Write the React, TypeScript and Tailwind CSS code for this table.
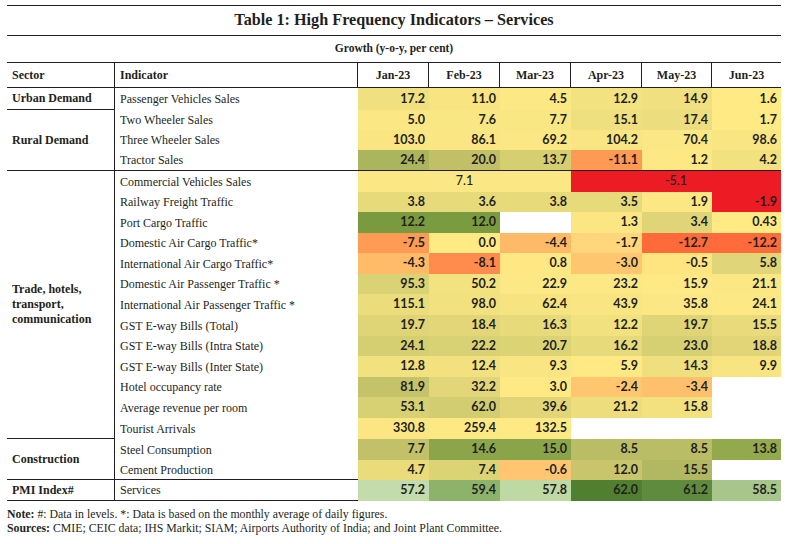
import React from "react";

type Cell = { v: string; c: string; span?: number; center?: boolean; normal?: boolean };
type Row = { h: number; ind: string; vals: Cell[]; sector?: { label: React.ReactNode; span: number; h: number }; lineInd?: boolean; lineVals?: boolean };

const W = "#ffffff";

const rows: Row[] = [
  {
    h: 22,
    sector: { label: "Urban Demand", span: 1, h: 22 },
    ind: "Passenger Vehicles Sales",
    vals: [
      { v: "17.2", c: "#f0e07f" },
      { v: "11.0", c: "#f8e582" },
      { v: "4.5", c: "#fde984" },
      { v: "12.9", c: "#f3e280" },
      { v: "14.9", c: "#f0e07f" },
      { v: "1.6", c: "#ffea84" },
    ],
  },
  {
    h: 20,
    sector: { label: "Rural Demand", span: 3, h: 61 },
    ind: "Two Wheeler Sales",
    vals: [
      { v: "5.0", c: "#fbe884" },
      { v: "7.6", c: "#f9e783" },
      { v: "7.7", c: "#f9e783" },
      { v: "15.1", c: "#efe07f" },
      { v: "17.4", c: "#ecde7e" },
      { v: "1.7", c: "#ffea84" },
    ],
  },
  {
    h: 20,
    ind: "Three Wheeler Sales",
    vals: [
      { v: "103.0", c: "#f9e683" },
      { v: "86.1", c: "#fae783" },
      { v: "69.2", c: "#fbe783" },
      { v: "104.2", c: "#f9e683" },
      { v: "70.4", c: "#fbe783" },
      { v: "98.6", c: "#f9e683" },
    ],
  },
  {
    h: 21,
    ind: "Tractor Sales",
    lineInd: true,
    lineVals: true,
    vals: [
      { v: "24.4", c: "#aab55e" },
      { v: "20.0", c: "#c1c068" },
      { v: "13.7", c: "#d6cf72" },
      { v: "-11.1", c: "#ff9a55" },
      { v: "1.2", c: "#fde884" },
      { v: "4.2", c: "#f1e17f" },
    ],
  },
  {
    h: 21,
    sector: {
      label: (
        <>
          Trade, hotels,
          <br />
          transport,
          <br />
          communication
        </>
      ),
      span: 13,
      h: 268,
    },
    ind: "Commercial Vehicles Sales",
    vals: [
      { v: "7.1", c: "#fbe783", span: 3, center: true, normal: true },
      { v: "-5.1", c: "#ed1c24", span: 3, center: true, normal: true },
    ],
  },
  {
    h: 20,
    ind: "Railway Freight Traffic",
    vals: [
      { v: "3.8", c: "#e6da7a" },
      { v: "3.6", c: "#e7da7a" },
      { v: "3.8", c: "#e6da7a" },
      { v: "3.5", c: "#e7da7a" },
      { v: "1.9", c: "#fde784" },
      { v: "-1.9", c: "#ed1c24" },
    ],
  },
  {
    h: 21,
    ind: "Port Cargo Traffic",
    vals: [
      { v: "12.2", c: "#7a9a40" },
      { v: "12.0", c: "#7b9b41" },
      { v: "", c: W },
      { v: "1.3", c: "#fbe683" },
      { v: "3.4", c: "#dfd477" },
      { v: "0.43", c: "#ffea84" },
    ],
  },
  {
    h: 20,
    ind: "Domestic Air Cargo Traffic*",
    vals: [
      { v: "-7.5", c: "#ff9b55" },
      { v: "0.0", c: "#ffea84" },
      { v: "-4.4", c: "#ffba68" },
      { v: "-1.7", c: "#ffd67b" },
      { v: "-12.7", c: "#ff6a3a" },
      { v: "-12.2", c: "#ff6b3b" },
    ],
  },
  {
    h: 21,
    ind: "International Air Cargo Traffic*",
    vals: [
      { v: "-4.3", c: "#ffbb68" },
      { v: "-8.1", c: "#ff8b4d" },
      { v: "0.8", c: "#ffe884" },
      { v: "-3.0", c: "#ffc670" },
      { v: "-0.5", c: "#ffe580" },
      { v: "5.8", c: "#e0d578" },
    ],
  },
  {
    h: 20,
    ind: "Domestic Air Passenger Traffic *",
    vals: [
      { v: "95.3", c: "#d9d375" },
      { v: "50.2", c: "#f3e280" },
      { v: "22.9", c: "#fce884" },
      { v: "23.2", c: "#fce884" },
      { v: "15.9", c: "#fee985" },
      { v: "21.1", c: "#fbe784" },
    ],
  },
  {
    h: 21,
    ind: "International Air Passenger Traffic *",
    vals: [
      { v: "115.1", c: "#ebdd7c" },
      { v: "98.0", c: "#f1e17f" },
      { v: "62.4", c: "#f6e481" },
      { v: "43.9", c: "#f9e682" },
      { v: "35.8", c: "#fbe784" },
      { v: "24.1", c: "#fde884" },
    ],
  },
  {
    h: 21,
    ind: "GST E-way Bills (Total)",
    vals: [
      { v: "19.7", c: "#dfd577" },
      { v: "18.4", c: "#e2d678" },
      { v: "16.3", c: "#e7da7a" },
      { v: "12.2", c: "#f2e17f" },
      { v: "19.7", c: "#dfd577" },
      { v: "15.5", c: "#e9db7b" },
    ],
  },
  {
    h: 20,
    ind: "GST E-way Bills (Intra State)",
    vals: [
      { v: "24.1", c: "#d5cf72" },
      { v: "22.2", c: "#d9d274" },
      { v: "20.7", c: "#dcd375" },
      { v: "16.2", c: "#e7da7a" },
      { v: "23.0", c: "#d7d073" },
      { v: "18.8", c: "#e1d577" },
    ],
  },
  {
    h: 21,
    ind: "GST E-way Bills (Inter State)",
    vals: [
      { v: "12.8", c: "#f2e17f" },
      { v: "12.4", c: "#f3e17f" },
      { v: "9.3", c: "#f9e582" },
      { v: "5.9", c: "#fee984" },
      { v: "14.3", c: "#efdf7e" },
      { v: "9.9", c: "#f8e481" },
    ],
  },
  {
    h: 20,
    ind: "Hotel occupancy rate",
    vals: [
      { v: "81.9", c: "#c4c36a" },
      { v: "32.2", c: "#e2d678" },
      { v: "3.0", c: "#ffe984" },
      { v: "-2.4", c: "#ffc670" },
      { v: "-3.4", c: "#ffc06c" },
      { v: "", c: W },
    ],
  },
  {
    h: 21,
    ind: "Average revenue per room",
    vals: [
      { v: "53.1", c: "#d8d174" },
      { v: "62.0", c: "#d2cd71" },
      { v: "39.6", c: "#e1d577" },
      { v: "21.2", c: "#eddd7c" },
      { v: "15.8", c: "#f3e17f" },
      { v: "", c: W },
    ],
  },
  {
    h: 21,
    ind: "Tourist Arrivals",
    vals: [
      { v: "330.8", c: "#fbe683" },
      { v: "259.4", c: "#fde884" },
      { v: "132.5", c: "#ffe984" },
      { v: "", c: W },
      { v: "", c: W },
      { v: "", c: W },
    ],
  },
  {
    h: 21,
    sector: { label: "Construction", span: 2, h: 41 },
    ind: "Steel Consumption",
    vals: [
      { v: "7.7", c: "#c2c169" },
      { v: "14.6", c: "#8ca54a" },
      { v: "15.0", c: "#8aa449" },
      { v: "8.5", c: "#bbbd66" },
      { v: "8.5", c: "#bbbd66" },
      { v: "13.8", c: "#93a94d" },
    ],
  },
  {
    h: 20,
    ind: "Cement Production",
    lineInd: true,
    vals: [
      { v: "4.7", c: "#ebdc7b" },
      { v: "7.4", c: "#dcd375" },
      { v: "-0.6", c: "#ffc570" },
      { v: "12.0", c: "#c8c56c" },
      { v: "15.5", c: "#b2b862" },
      { v: "", c: W },
    ],
  },
  {
    h: 21,
    sector: { label: "PMI Index#", span: 1, h: 21 },
    ind: "Services",
    lineInd: true,
    vals: [
      { v: "57.2", c: "#c4dcab" },
      { v: "59.4", c: "#8db26b" },
      { v: "57.8", c: "#bfd9a5" },
      { v: "62.0", c: "#4f7f2f" },
      { v: "61.2", c: "#5f8b3e" },
      { v: "58.5", c: "#a7c68b" },
    ],
  },
];

const months = ["Jan-23", "Feb-23", "Mar-23", "Apr-23", "May-23", "Jun-23"];

export default function App() {
  const cells: React.ReactNode[] = [];
  cells.push(
    <div key="h-s" className="flex items-center border-y border-r border-[#231f20] pl-[5px] font-bold">
      Sector
    </div>
  );
  cells.push(
    <div key="h-i" className="flex items-center border-y border-r border-[#231f20] pl-[5px] font-bold">
      Indicator
    </div>
  );
  months.forEach((m, i) => {
    cells.push(
      <div
        key={"h-" + m}
        className={
          "flex items-center justify-center border-y border-[#231f20] font-bold " +
          (i < months.length - 1 ? "border-r" : "")
        }
      >
        {m}
      </div>
    );
  });

  rows.forEach((r, ri) => {
    if (r.sector) {
      const spanCls =
        r.sector.span === 1
          ? "row-span-1"
          : r.sector.span === 2
          ? "row-span-2"
          : r.sector.span === 3
          ? "row-span-3"
          : "row-span-13";
      cells.push(
        <div
          key={"s" + ri}
          className={
            spanCls +
            " flex items-center border-r border-b border-[#231f20] pl-[5px] font-bold leading-[15px]"
          }
        >
          <div>{r.sector.label}</div>
        </div>
      );
    }
    cells.push(
      <div
        key={"i" + ri}
        className={
          "flex items-center pl-[5px] whitespace-nowrap " + (r.lineInd ? "border-b border-[#231f20]" : "")
        }
      >
        {r.ind}
      </div>
    );
    r.vals.forEach((c, ci) => {
      cells.push(
        <div
          key={"v" + ri + "-" + ci}
          style={{ backgroundColor: c.c }}
          className={
            (c.span === 3 ? "col-span-3 " : "") +
            "flex items-center font-['Lato',sans-serif] text-[12.5px] " +
            (c.center ? "justify-center font-medium " : "justify-end pr-[4px] font-bold ") +
            (r.lineVals ? "border-b border-[#231f20]" : "")
          }
        >
          {c.v}
        </div>
      );
    });
  });

  return (
    <div className="w-[788px] h-[544px] bg-white px-[7px] pt-[5px] font-['Liberation_Serif',serif] text-[12px] text-[#231f20]">
      <div className="border-t border-[#231f20] h-[30px] flex items-center justify-center">
        <span className="text-[16.2px] font-bold">Table 1: High Frequency Indicators – Services</span>
      </div>
      <div className="border-t border-[#231f20] h-[27px] flex items-center justify-center">
        <span className="text-[11.5px] font-bold">Growth (y-o-y, per cent)</span>
      </div>
      <div className="grid grid-cols-[108px_243px_71px_71px_71px_71px_70px_69px] grid-rows-[26px_22px_20px_20px_21px_21px_20px_21px_20px_21px_20px_21px_21px_20px_21px_20px_21px_21px_21px_20px_21px]">
        {cells}
      </div>
      <div className="pt-[6px] text-[11.8px] leading-[14px]">
        <div>
          <span className="font-bold">Note:</span> #: Data in levels. *: Data is based on the monthly average of daily figures.
        </div>
        <div>
          <span className="font-bold">Sources:</span> CMIE; CEIC data; IHS Markit; SIAM; Airports Authority of India; and Joint Plant Committee.
        </div>
      </div>
    </div>
  );
}
